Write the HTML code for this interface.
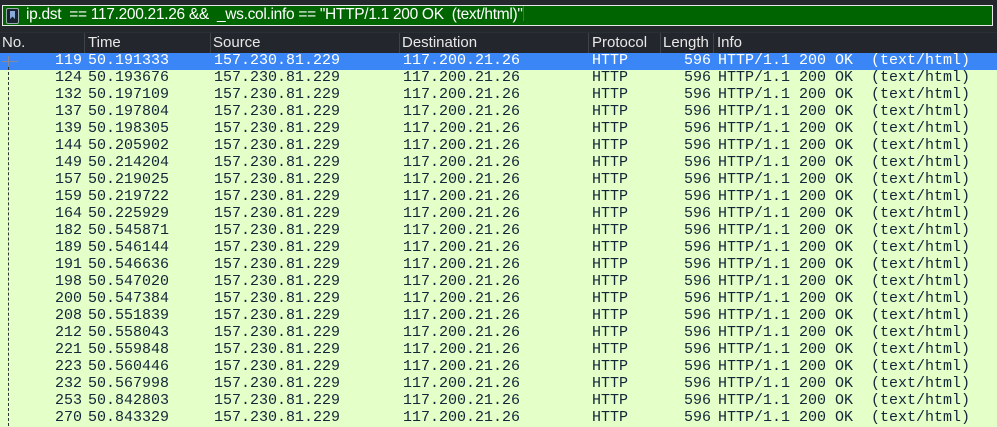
<!DOCTYPE html><html><head><style>
body{margin:0;width:997px;height:426px;overflow:hidden;background:#2b2e34;font-family:"Liberation Sans",sans-serif;position:relative}
#top{position:absolute;left:0;top:0;width:997px;height:32px;background:#24272c}
#flt{position:absolute;left:2px;top:5px;width:991px;height:21px;background:#006400;border:1px solid #e8e8e8;box-sizing:border-box}
#bm{position:absolute;left:3px;top:2px;width:13px;height:16px;border:1px solid #9aa;border-radius:2px;background:#1a2330;box-sizing:border-box}
#bm i{position:absolute;left:3px;top:2px;width:5px;height:8px;background:#8aaad8;clip-path:polygon(0 0,100% 0,100% 100%,50% 70%,0 100%)}
#ft{position:absolute;left:23px;top:0px;color:#fff;font-size:15.5px;white-space:pre;letter-spacing:-0.3px}
#cur{display:inline-block;width:1px;height:15px;background:#f0a;vertical-align:-2px}
#hdr{position:absolute;left:0;top:33px;width:997px;height:20px;background:#23262c;color:#e8e8e8;font-size:15px}
#hdr span{position:absolute;top:1px}
#hdr b{position:absolute;top:0;width:1px;height:20px;background:#3e4249}
.r{position:absolute;left:0;width:997px;height:17px;background:#e4ffc7;color:#12263a;font-family:"Liberation Mono",monospace;font-size:15px;white-space:pre}
.r span{position:absolute;top:-1px}
.s{background:#3a86f7;color:#fff}
#dl{position:absolute;left:8px;top:62px;height:364px;border-left:1px dashed #333}
</style></head><body>
<div id="top"><div id="flt"><div id="bm"><i></i></div><div id="ft">ip.dst  == 117.200.21.26 &amp;&amp;  _ws.col.info == "HTTP/1.1 200 OK  (text/html)"<span id="cur"></span></div></div></div>
<div id="hdr"><span style="left:2px">No.</span><b style="left:84px"></b><span style="left:88px">Time</span><b style="left:210px"></b><span style="left:213px">Source</span><b style="left:399px"></b><span style="left:402px">Destination</span><b style="left:588px"></b><span style="left:592px">Protocol</span><b style="left:660px"></b><span style="left:663px">Length</span><b style="left:713px"></b><span style="left:717px">Info</span></div>
<div id="rows"></div>
<script>
var d=[["119","50.191333"],["124","50.193676"],["132","50.197109"],["137","50.197804"],["139","50.198305"],["144","50.205902"],["149","50.214204"],["157","50.219025"],["159","50.219722"],["164","50.225929"],["182","50.545871"],["189","50.546144"],["191","50.546636"],["198","50.547020"],["200","50.547384"],["208","50.551839"],["212","50.558043"],["221","50.559848"],["223","50.560446"],["232","50.567998"],["253","50.842803"],["270","50.843329"]];
var h="";d.forEach(function(x,i){h+='<div class="r'+(i==0?' s':'')+'" style="top:'+(53+i*17)+'px"><span style="left:55px">'+x[0]+'</span><span style="left:88px">'+x[1]+'</span><span style="left:214px">157.230.81.229</span><span style="left:403px">117.200.21.26</span><span style="left:592px">HTTP</span><span style="left:684px">596</span><span style="left:718px">HTTP/1.1 200 OK  (text/html)</span></div>';});
h+='<div id="dl"></div><div style="position:absolute;left:2px;top:61px;width:16px;height:1px;background:#889"></div><div style="position:absolute;left:8px;top:56px;width:1px;height:10px;background:#889"></div>';
document.getElementById("rows").innerHTML=h;
</script>
</body></html>
